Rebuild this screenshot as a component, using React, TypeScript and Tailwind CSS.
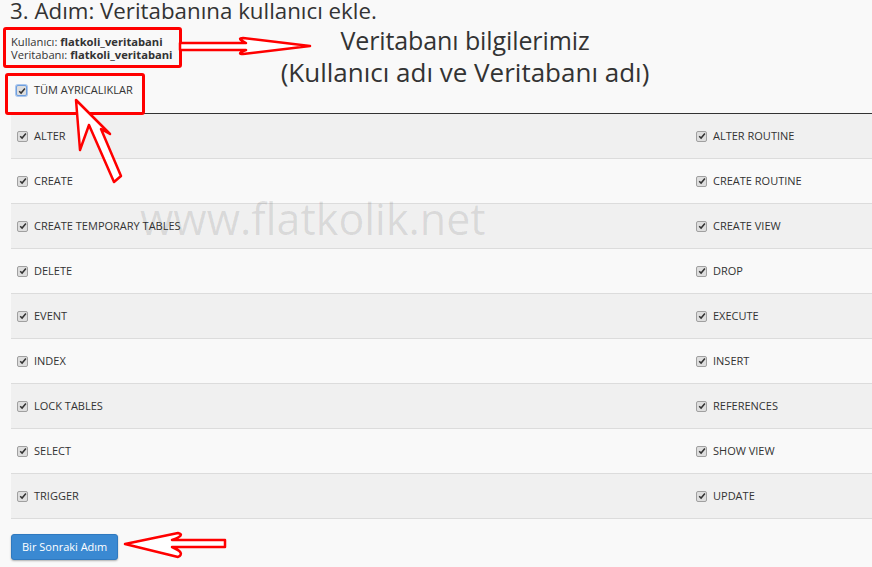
import React from "react";

const rows: [string, string][] = [
  ["ALTER", "ALTER ROUTINE"],
  ["CREATE", "CREATE ROUTINE"],
  ["CREATE TEMPORARY TABLES", "CREATE VIEW"],
  ["DELETE", "DROP"],
  ["EVENT", "EXECUTE"],
  ["INDEX", "INSERT"],
  ["LOCK TABLES", "REFERENCES"],
  ["SELECT", "SHOW VIEW"],
  ["TRIGGER", "UPDATE"],
];

function Check({ focused = false }: { focused?: boolean }) {
  return (
    <span
      className={
        "flex h-[11px] w-[11px] shrink-0 items-center justify-center rounded-[2px] border bg-[#dedede] " +
        (focused ? "border-[#6f9fde] ring-1 ring-[#a9c6ee]" : "border-[#a0a0a0]")
      }
    >
      <svg width="8" height="8" viewBox="0 0 8 8">
        <path d="M1.2 4.2 L3.1 6.1 L6.9 1.6" fill="none" stroke="#333" strokeWidth="1.5" />
      </svg>
    </span>
  );
}

function Item({ label }: { label: string }) {
  return (
    <div className="flex items-center gap-[6px]">
      <Check />
      <span className="text-[11px] text-[#333]">{label}</span>
    </div>
  );
}

export default function App() {
  return (
    <div className="relative h-[567px] w-[872px] overflow-hidden bg-[#f9f9f9] font-['Open_Sans',sans-serif] text-[#333]">
      <h1 className="-mt-[3px] pl-[10px] text-[22.3px] leading-[27px]">3. Adım: Veritabanına kullanıcı ekle.</h1>

      <div className="ml-[3px] mt-[3px] inline-block rounded-[3px] border-[3px] border-[#f00] pb-[4px] pl-[5px] pr-[6px] pt-[5px] text-[11.2px] leading-[13px]">
        <div>
          Kullanıcı: <b className="font-bold">flatkoli_veritabani</b>
        </div>
        <div>
          Veritabanı: <b className="font-bold">flatkoli_veritabani</b>
        </div>
      </div>

      <div className="flex h-[45px] items-center gap-[7px] pl-[16px]">
        <Check focused />
        <span className="text-[11px] text-[#333]">TÜM AYRICALIKLAR</span>
      </div>

      <div className="ml-[11px] border-t border-[#333]">
        {rows.map(([a, b], i) => (
          <div
            key={a}
            className={
              "grid h-[45px] grid-cols-[679px_1fr] items-center border-b border-[#dcdcdc] " +
              (i % 2 === 0 ? "bg-[#f0f0f0]" : "bg-[#f9f9f9]")
            }
          >
            <div className="pl-[6px]">
              <Item label={a} />
            </div>
            <div className="pl-[6px]">
              <Item label={b} />
            </div>
          </div>
        ))}
      </div>

      <button className="ml-[11px] mt-[15px] h-[26px] rounded-[3px] border border-[#2f79bf] bg-[#3a89d2] px-[10px] text-[11px] text-white shadow-[0_1px_2px_rgba(0,0,0,0.3)]">
        Bir Sonraki Adım
      </button>

      {/* annotations */}
      <div className="pointer-events-none absolute left-[5px] top-[73px] h-[42px] w-[140px] rounded-[3px] border-[3px] border-[#f00]" />

      <div className="pointer-events-none absolute left-[250px] top-[24px] w-[430px] text-center text-[26px] leading-[32px] text-[#333]">
        <div className="text-[25px] tracking-[-0.1px]">Veritabanı bilgilerimiz</div>
        <div>(Kullanıcı adı ve Veritabanı adı)</div>
      </div>

      <div className="pointer-events-none absolute left-[140px] top-[197px] text-[43px] leading-[43px] text-black/10">
        www.flatkolik.net
      </div>

      <svg className="pointer-events-none absolute left-0 top-0" width="872" height="567">
        <g fill="#fff" stroke="#f00" strokeWidth="2.5" strokeLinejoin="round">
          <path d="M180 43 L246 43 Q236 38 243 38 L310 46 L243 54 Q236 54 246 50 L180 50 Z" />
          <path d="M125 544 L178 533 Q186 535 172 540 L225 540 L225 547 L172 547 Q186 553 178 557 Z" />
          <path d="M76 100 L110 134 L101 129 L121 176 L114 182 L89 125 L80 150 Z" />
        </g>
      </svg>
    </div>
  );
}
